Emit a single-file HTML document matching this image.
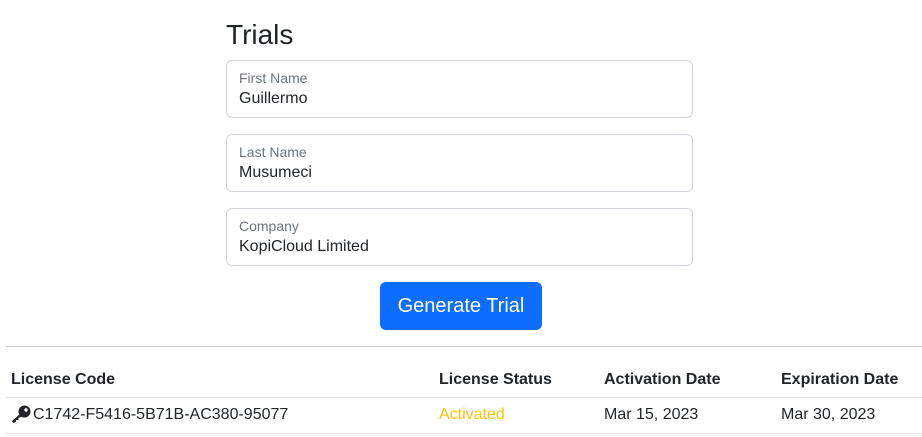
<!DOCTYPE html>
<html><head><style>
body{margin:0;width:922px;height:437px;background:#fff;font-family:"Liberation Sans",sans-serif;color:#212529;position:relative;overflow:hidden}
.a{position:absolute;white-space:nowrap}
.in{position:absolute;left:226px;width:467px;height:58px;border:1px solid #ced4da;border-radius:6px;box-sizing:border-box}
.in .l{position:absolute;left:12px;top:9px;font-size:14px;color:#6c757d}
.in .v{position:absolute;left:12px;top:29px;font-size:16px;color:#212529}
.line{position:absolute;height:1px;background:#dee2e6}
</style></head><body>
<div class="a" style="left:226px;top:19px;font-size:28px;">Trials</div>
<div class="in" style="top:60px"><div class="l">First Name</div><div class="v">Guillermo</div></div>
<div class="in" style="top:134px"><div class="l">Last Name</div><div class="v">Musumeci</div></div>
<div class="in" style="top:208px"><div class="l">Company</div><div class="v">KopiCloud Limited</div></div>
<div class="a" style="left:380px;top:282px;width:162px;height:48px;background:#0d6efd;border-radius:6px;color:#fff;font-size:20px;line-height:48px;text-align:center">Generate Trial</div>
<div class="line" style="left:6px;top:346px;width:916px;background:#c8ccd0"></div>
<div class="a" style="left:11px;top:371px;font-size:16px;font-weight:bold">License Code</div>
<div class="a" style="left:439px;top:371px;font-size:16px;font-weight:bold">License Status</div>
<div class="a" style="left:604px;top:371px;font-size:16px;font-weight:bold">Activation Date</div>
<div class="a" style="left:781px;top:371px;font-size:16px;font-weight:bold">Expiration Date</div>
<div class="line" style="left:6px;top:397px;width:916px"></div>
<svg class="a" style="left:11px;top:405px" width="20" height="18" viewBox="0 0 20 18"><circle cx="13.5" cy="6.5" r="6" fill="#212529"/><circle cx="15" cy="5" r="1.7" fill="#fff"/><path d="M9.5 8.5 L1 16 L2 18 L5 17 L5 15 L7.5 15 L7.5 13 L12 11Z" fill="#212529"/></svg>
<div class="a" style="left:33px;top:406px;font-size:16px">C1742-F5416-5B71B-AC380-95077</div>
<div class="a" style="left:439px;top:406px;font-size:16px;color:#ffc107">Activated</div>
<div class="a" style="left:604px;top:406px;font-size:16px">Mar 15, 2023</div>
<div class="a" style="left:781px;top:406px;font-size:16px">Mar 30, 2023</div>
<div class="line" style="left:6px;top:433px;width:916px"></div>
</body></html>
